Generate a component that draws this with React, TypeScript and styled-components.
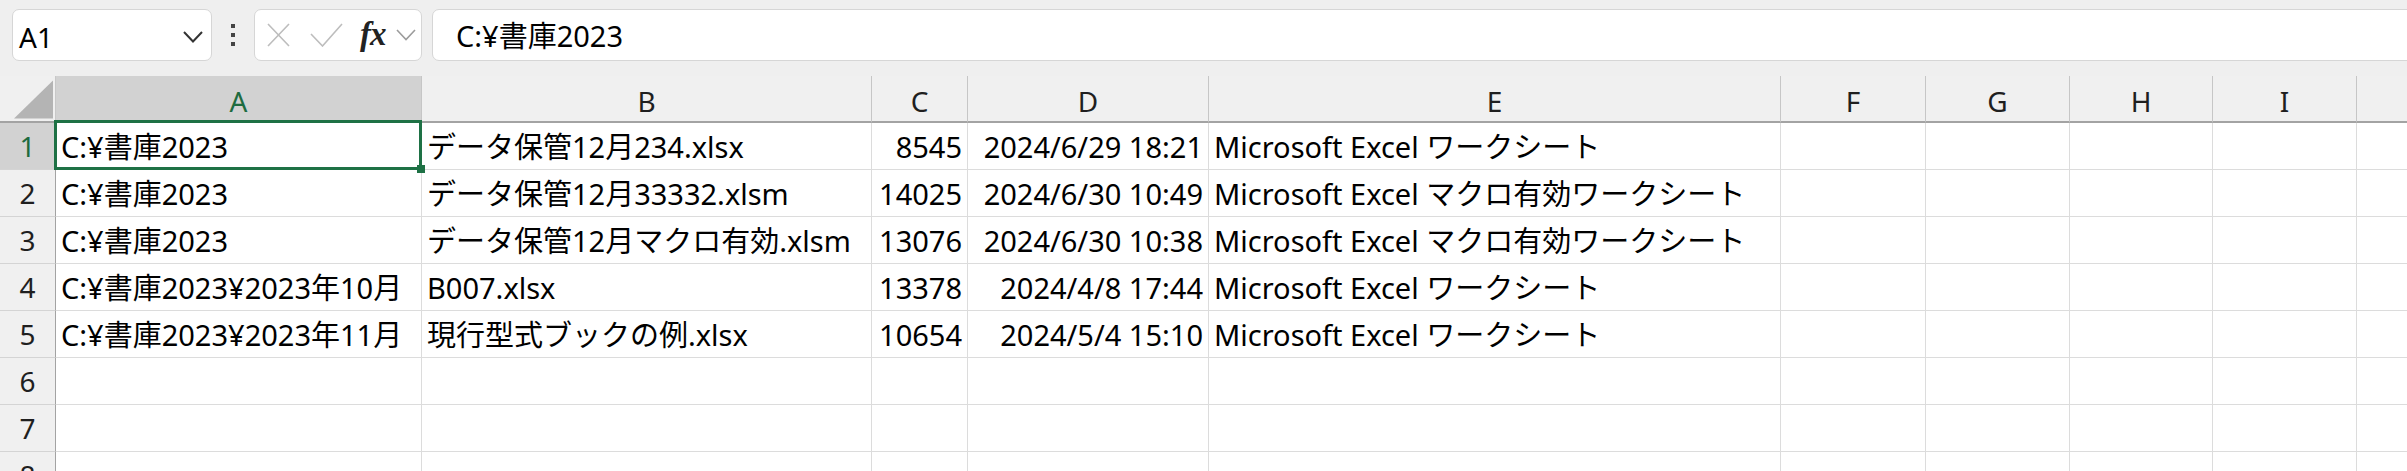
import { Fragment } from 'react';
import styled, { createGlobalStyle } from 'styled-components';

const GlobalStyle = createGlobalStyle`
  html, body {
    margin: 0;
    padding: 0;
    background: #f0f0f0;
    overflow: hidden;
  }
  body {
    font-family: 'Noto Sans', 'Noto Sans CJK JP', sans-serif;
    color: #000;
  }
`;

const Page = styled.div`
  width: 2407px;
  height: 471px;
  overflow: hidden;
`;

const Toolbar = styled.div`
  display: flex;
  align-items: flex-start;
  height: 76px;
  padding: 9px 0 0 12px;
  box-sizing: border-box;
  background: #efefef;
`;

const Box = styled.div`
  display: flex;
  align-items: center;
  height: 52px;
  box-sizing: border-box;
  background: #fff;
  border: 1px solid #d6d6d6;
  border-radius: 7px;
`;

const NameBox = styled(Box)`
  width: 200px;
  justify-content: space-between;
  padding: 4px 8px 0 6px;
  font-size: 28px;
  line-height: 1;
`;

const Dots = styled.div`
  width: 42px;
  height: 52px;
  display: flex;
  flex-direction: column;
  align-items: center;
  justify-content: center;
  gap: 5px;

  span {
    width: 4px;
    height: 4px;
    background: #444;
  }
`;

const FxBox = styled(Box)`
  width: 168px;
  padding-left: 12px;
`;

const IconSlot = styled.div<{ $ml?: number }>`
  display: flex;
  align-items: center;
  margin-left: ${(p) => p.$ml ?? 0}px;
`;

const FxText = styled.span`
  font-family: 'Liberation Serif', 'DejaVu Serif', serif;
  font-style: italic;
  font-weight: bold;
  font-size: 33px;
  line-height: 1;
  color: #222;
  margin-top: -2px;
  letter-spacing: -1px;
`;

const FormulaInput = styled(Box)`
  flex: 1;
  margin-left: 10px;
  margin-right: -10px;
  padding-left: 23px;
  font-size: 29px;
  line-height: 1;
`;

const Sheet = styled.div<{ $cols: string }>`
  display: grid;
  grid-template-columns: ${(p) => p.$cols};
  grid-auto-rows: 47px;
  background: #fff;
  font-size: 29px;
  line-height: 1;
`;

const Corner = styled.div`
  background: #f0f0f0;
  border-bottom: 2px solid #a3a3a3;
  border-right: 1px solid #c8c8c8;
  display: flex;
  align-items: flex-end;
  padding: 0 2px 2px 14px;
`;

const ColHead = styled.div<{ $active?: boolean }>`
  display: flex;
  align-items: center;
  justify-content: center;
  background: ${(p) => (p.$active ? '#d2d2d2' : '#f0f0f0')};
  color: ${(p) => (p.$active ? '#1e6b40' : '#1f1f1f')};
  border-right: 1px solid #c6c6c6;
  border-bottom: 2px solid #a3a3a3;
  font-size: 28px;
  padding-top: 4px;
`;

const RowHead = styled.div<{ $active?: boolean }>`
  display: flex;
  align-items: center;
  justify-content: center;
  background: ${(p) => (p.$active ? '#d2d2d2' : '#f0f0f0')};
  color: ${(p) => (p.$active ? '#1e6b40' : '#1f1f1f')};
  border-right: 1px solid #a3a3a3;
  border-bottom: 1px solid #d4d4d4;
  font-size: 28px;
`;

const Cell = styled.div<{ $right?: boolean }>`
  position: relative;
  display: flex;
  align-items: center;
  justify-content: ${(p) => (p.$right ? 'flex-end' : 'flex-start')};
  padding: 0 5px;
  white-space: nowrap;
  border-right: 1px solid #dcdcdc;
  border-bottom: 1px solid #dcdcdc;
`;

const Selection = styled.div`
  position: absolute;
  top: -3px;
  left: -2px;
  right: -1px;
  bottom: -1px;
  border: 3px solid #1e7145;
  z-index: 2;
  pointer-events: none;

  &::after {
    content: '';
    position: absolute;
    right: -6px;
    bottom: -6px;
    width: 8px;
    height: 8px;
    background: #1e7145;
  }
`;

// J is only partly on screen, its label sits past the right edge
const columns = [
  { key: 'A', label: 'A', width: 366 },
  { key: 'B', label: 'B', width: 450 },
  { key: 'C', label: 'C', width: 96, right: true },
  { key: 'D', label: 'D', width: 241, right: true },
  { key: 'E', label: 'E', width: 572 },
  { key: 'F', label: 'F', width: 145 },
  { key: 'G', label: 'G', width: 144 },
  { key: 'H', label: 'H', width: 143 },
  { key: 'I', label: 'I', width: 144 },
  { key: 'J', label: '', width: 200 },
];

const data: string[][] = [
  ['C:¥書庫2023', 'データ保管12月234.xlsx', '8545', '2024/6/29 18:21', 'Microsoft Excel ワークシート'],
  ['C:¥書庫2023', 'データ保管12月33332.xlsm', '14025', '2024/6/30 10:49', 'Microsoft Excel マクロ有効ワークシート'],
  ['C:¥書庫2023', 'データ保管12月マクロ有効.xlsm', '13076', '2024/6/30 10:38', 'Microsoft Excel マクロ有効ワークシート'],
  ['C:¥書庫2023¥2023年10月', 'B007.xlsx', '13378', '2024/4/8 17:44', 'Microsoft Excel ワークシート'],
  ['C:¥書庫2023¥2023年11月', '現行型式ブックの例.xlsx', '10654', '2024/5/4 15:10', 'Microsoft Excel ワークシート'],
];

const rowCount = 8;

const Chevron = ({ color, width }: { color: string; width: number }) => (
  <svg width="20" height="12" viewBox="0 0 20 12">
    <polyline points="1,1 10,10.5 19,1" fill="none" stroke={color} strokeWidth={width} />
  </svg>
);

const App = () => {
  const cols = ['56px', ...columns.map((c) => `${c.width}px`)].join(' ');

  return (
    <Page>
      <GlobalStyle />
      <Toolbar>
        <NameBox>
          <span>A1</span>
          <Chevron color="#333" width={2} />
        </NameBox>
        <Dots>
          <span />
          <span />
          <span />
        </Dots>
        <FxBox>
          <IconSlot>
            <svg width="23" height="24" viewBox="0 0 23 24">
              <path d="M1 1 L22 23 M22 1 L1 23" stroke="#bdbdbd" strokeWidth="1.6" fill="none" />
            </svg>
          </IconSlot>
          <IconSlot $ml={20}>
            <svg width="33" height="24" viewBox="0 0 33 24">
              <polyline points="1,11 12.5,23 32,1" stroke="#bdbdbd" strokeWidth="1.6" fill="none" />
            </svg>
          </IconSlot>
          <IconSlot $ml={17}>
            <FxText>fx</FxText>
          </IconSlot>
          <IconSlot $ml={10}>
            <Chevron color="#9c9c9c" width={1.6} />
          </IconSlot>
        </FxBox>
        <FormulaInput>C:¥書庫2023</FormulaInput>
      </Toolbar>

      <Sheet $cols={cols}>
        <Corner>
          <svg width="40" height="39" viewBox="0 0 40 39">
            <polygon points="40,0 40,39 0,39" fill="#b4b4b4" />
          </svg>
        </Corner>
        {columns.map((c) => (
          <ColHead key={c.key} $active={c.key === 'A'}>
            {c.label}
          </ColHead>
        ))}

        {Array.from({ length: rowCount }, (_, r) => (
          <Fragment key={r}>
            <RowHead $active={r === 0}>{r + 1}</RowHead>
            {columns.map((c, ci) => (
              <Cell key={c.key} $right={c.right}>
                {data[r]?.[ci] ?? ''}
                {r === 0 && ci === 0 && <Selection />}
              </Cell>
            ))}
          </Fragment>
        ))}
      </Sheet>
    </Page>
  );
};

export default App;
